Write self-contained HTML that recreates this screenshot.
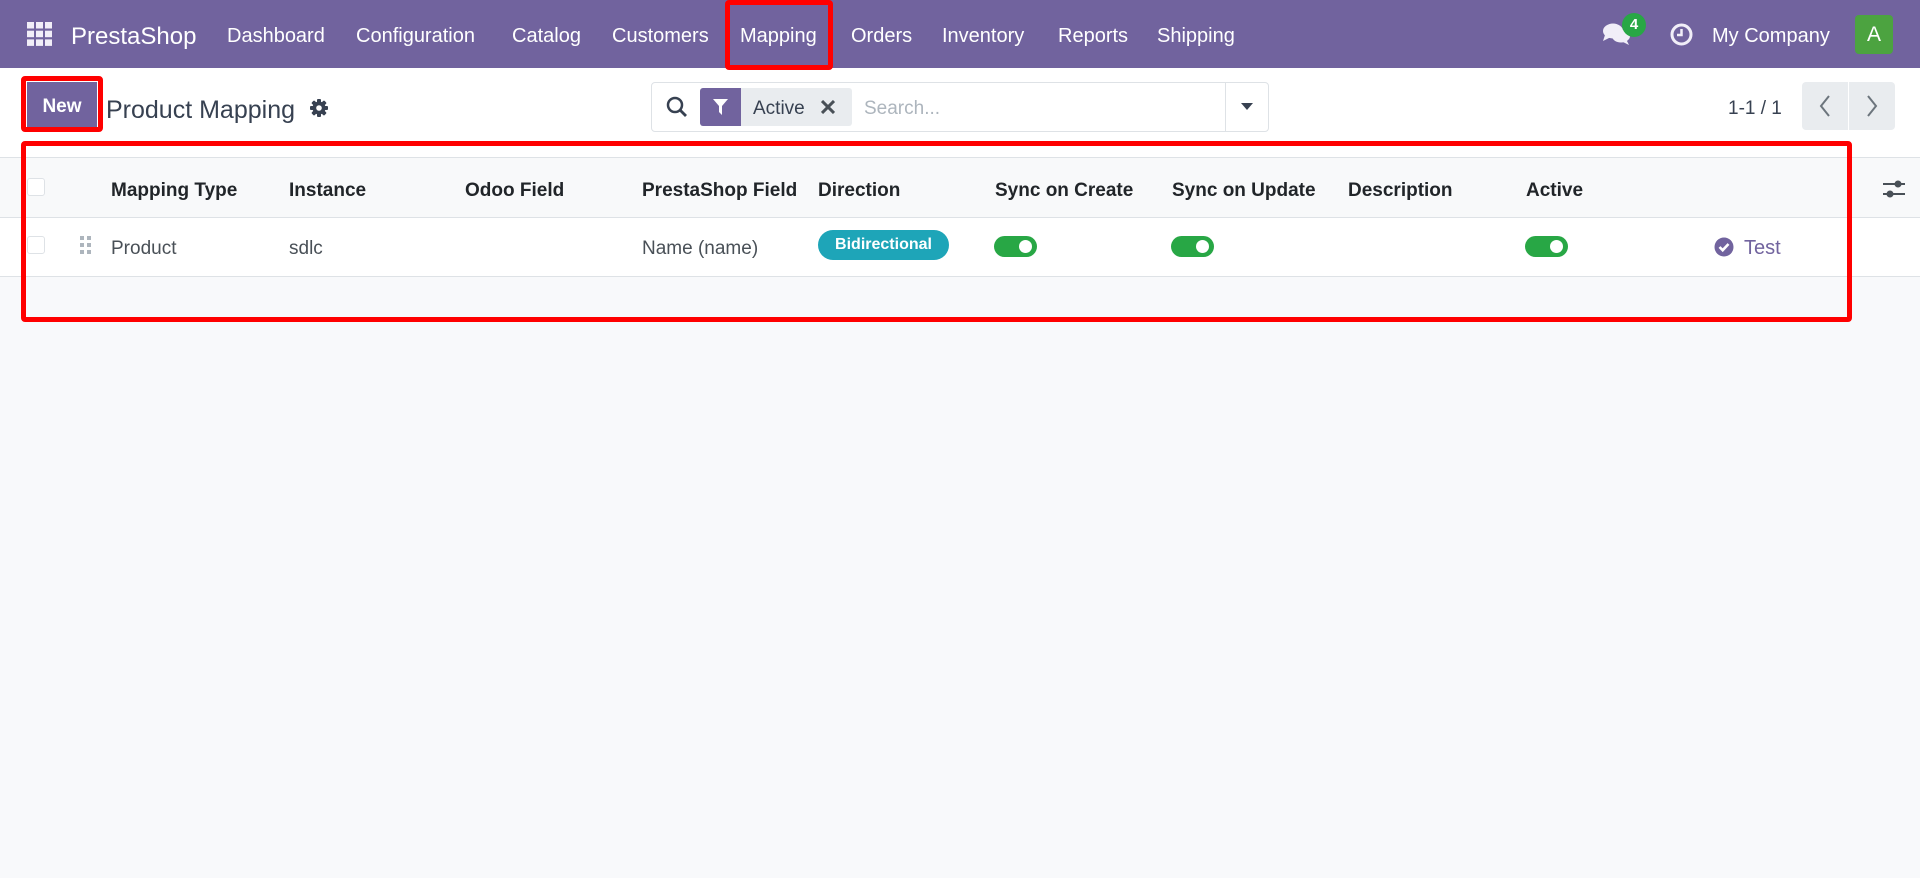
<!DOCTYPE html>
<html><head><meta charset="utf-8"><style>
*{box-sizing:border-box;margin:0;padding:0}
body{width:1920px;height:878px;overflow:hidden;background:#f8f9fb;font-family:"Liberation Sans",sans-serif;color:#374151;position:relative}
.a{position:absolute;white-space:nowrap}
.nav{position:absolute;left:0;top:0;width:1920px;height:68px;background:#71639e;color:#fff}
.nav .a{font-size:20px;top:25px;color:#fff}
.cp{position:absolute;left:0;top:68px;width:1920px;height:90px;background:#fff}
.th{font-weight:bold;font-size:19px;color:#212529;top:180px}
.td{font-size:19px;color:#495057;top:238px}
.tog{position:absolute;width:43px;height:21px;border-radius:11px;background:#28a745;top:236px}
.tog:after{content:"";position:absolute;right:5px;top:4px;width:13px;height:13px;border-radius:50%;background:#fff}
.red{position:absolute;border:5px solid #ff0000;border-radius:4px}
</style></head><body>
<div class="nav">
 <svg class="a" style="left:27px;top:22px" width="25" height="24" viewBox="0 0 25 24" fill="#f1eef8"><rect x="0" y="0" width="7" height="6.5"/><rect x="9" y="0" width="7" height="6.5"/><rect x="18" y="0" width="7" height="6.5"/><rect x="0" y="8.7" width="7" height="6.5"/><rect x="9" y="8.7" width="7" height="6.5"/><rect x="18" y="8.7" width="7" height="6.5"/><rect x="0" y="17.4" width="7" height="6.5"/><rect x="9" y="17.4" width="7" height="6.5"/><rect x="18" y="17.4" width="7" height="6.5"/></svg>
 <div class="a" style="left:71px;top:23px;font-size:24px">PrestaShop</div>
 <div class="a" style="left:227px">Dashboard</div>
 <div class="a" style="left:356px">Configuration</div>
 <div class="a" style="left:512px">Catalog</div>
 <div class="a" style="left:612px">Customers</div>
 <div class="a" style="left:740px">Mapping</div>
 <div class="a" style="left:851px">Orders</div>
 <div class="a" style="left:942px">Inventory</div>
 <div class="a" style="left:1058px">Reports</div>
 <div class="a" style="left:1157px">Shipping</div>
 <svg class="a" style="left:1602px;top:22px" width="30" height="24" viewBox="0 0 30 24" fill="#f1eef8"><ellipse cx="11" cy="9" rx="10" ry="7.5"/><path d="M3 13 L1 19 L9 15Z"/><ellipse cx="19" cy="14" rx="9" ry="6.5"/><path d="M24 17 L27 23 L19 19Z"/></svg>
 <div class="a" style="left:1622px;top:13px;width:24px;height:24px;border-radius:50%;background:#28a745;color:#fff;font-size:15px;font-weight:bold;text-align:center;line-height:24px">4</div>
 <svg class="a" style="left:1670px;top:23px" width="23" height="23" viewBox="0 0 23 23"><circle cx="11.5" cy="11.5" r="9.5" fill="none" stroke="#f1eef8" stroke-width="3"/><path d="M11.5 6 V12 H7" fill="none" stroke="#f1eef8" stroke-width="2.5"/></svg>
 <div class="a" style="left:1712px">My Company</div>
 <div class="a" style="left:1855px;top:15px;width:38px;height:39px;border-radius:4px;background:#4ca340;color:#fff;font-size:21px;text-align:center;line-height:39px">A</div>
</div>
<div class="cp"></div>
<div class="a" style="left:27px;top:82px;width:70px;height:47px;background:#71639e;color:#fff;font-weight:bold;font-size:19px;text-align:center;line-height:49px">New</div>
<div class="a" style="left:106px;top:96px;font-size:25px;color:#374151">Product Mapping</div>
<svg class="a" style="left:310px;top:99px" width="18" height="18" viewBox="0 0 18 18"><g fill="#374151"><circle cx="9" cy="9" r="6.5"/><rect x="7" y="0" width="4" height="18" rx="1"/><rect x="0" y="7" width="18" height="4" rx="1"/><rect x="7" y="0" width="4" height="18" rx="1" transform="rotate(45 9 9)"/><rect x="7" y="0" width="4" height="18" rx="1" transform="rotate(-45 9 9)"/></g><circle cx="9" cy="9" r="2.8" fill="#fff"/></svg>
<div class="a" style="left:651px;top:82px;width:618px;height:50px;border:1px solid #dee2e6;border-radius:4px;background:#fff"></div>
<svg class="a" style="left:666px;top:96px" width="22" height="22" viewBox="0 0 22 22"><circle cx="9" cy="9" r="7" fill="none" stroke="#374151" stroke-width="2.5"/><path d="M14 14 L20 20" stroke="#374151" stroke-width="2.8"/></svg>
<div class="a" style="left:700px;top:88px;width:152px;height:38px;border-radius:3px;background:#e9ecef"></div>
<div class="a" style="left:700px;top:88px;width:41px;height:38px;border-radius:3px 0 0 3px;background:#71639e"></div>
<svg class="a" style="left:713px;top:99px" width="15" height="16" viewBox="0 0 15 16"><path d="M0 0 H15 L9 7 V16 L6 13 V7Z" fill="#fff"/></svg>
<div class="a" style="left:753px;top:98px;font-size:19px;color:#374151">Active</div>
<svg class="a" style="left:821px;top:100px" width="14" height="14" viewBox="0 0 14 14"><path d="M1 1 L13 13 M13 1 L1 13" stroke="#495057" stroke-width="3"/></svg>
<div class="a" style="left:864px;top:98px;font-size:19px;color:#adb5bd">Search...</div>
<div class="a" style="left:1225px;top:82px;width:1px;height:50px;background:#dee2e6"></div>
<svg class="a" style="left:1241px;top:103px" width="12" height="8" viewBox="0 0 12 8"><path d="M0 0 H12 L6 7Z" fill="#374151"/></svg>
<div class="a" style="left:1728px;top:98px;font-size:19px;color:#374151">1-1 / 1</div>
<div class="a" style="left:1802px;top:82px;width:46px;height:48px;background:#e9ecef;border-radius:4px 0 0 4px"></div>
<div class="a" style="left:1849px;top:82px;width:46px;height:48px;background:#e9ecef;border-radius:0 4px 4px 0"></div>
<svg class="a" style="left:1818px;top:94px" width="14" height="24" viewBox="0 0 14 24"><path d="M11 2 L3 12 L11 22" fill="none" stroke="#6c757d" stroke-width="2"/></svg>
<svg class="a" style="left:1865px;top:94px" width="14" height="24" viewBox="0 0 14 24"><path d="M3 2 L11 12 L3 22" fill="none" stroke="#6c757d" stroke-width="2"/></svg>

<div class="a" style="left:0;top:157px;width:1920px;height:1px;background:#dee2e6"></div>
<div class="a" style="left:0;top:158px;width:1920px;height:59px;background:#f8f9fa"></div>
<div class="a" style="left:0;top:217px;width:1920px;height:1px;background:#dee2e6"></div>
<div class="a" style="left:0;top:218px;width:1920px;height:58px;background:#fff"></div>
<div class="a" style="left:0;top:276px;width:1920px;height:1px;background:#dee2e6"></div>
<div class="a" style="left:27px;top:178px;width:18px;height:18px;border:1px solid #dee2e6;border-radius:3px;background:#fff"></div>
<div class="a" style="left:27px;top:236px;width:18px;height:18px;border:1px solid #dee2e6;border-radius:3px;background:#fff"></div>
<div class="a th" style="left:111px">Mapping Type</div>
<div class="a th" style="left:289px">Instance</div>
<div class="a th" style="left:465px">Odoo Field</div>
<div class="a th" style="left:642px">PrestaShop Field</div>
<div class="a th" style="left:818px">Direction</div>
<div class="a th" style="left:995px">Sync on Create</div>
<div class="a th" style="left:1172px">Sync on Update</div>
<div class="a th" style="left:1348px">Description</div>
<div class="a th" style="left:1526px">Active</div>
<svg class="a" style="left:1883px;top:180px" width="22" height="18" viewBox="0 0 22 18"><path d="M0 4 H22 M0 14 H22" stroke="#495057" stroke-width="2"/><circle cx="15" cy="4" r="3.5" fill="#495057"/><circle cx="7" cy="14" r="3.5" fill="#495057"/></svg>
<svg class="a" style="left:80px;top:236px" width="12" height="20" viewBox="0 0 12 20" fill="#adb5bd"><rect x="0" y="0" width="4" height="4"/><rect x="7" y="0" width="4" height="4"/><rect x="0" y="7" width="4" height="4"/><rect x="7" y="7" width="4" height="4"/><rect x="0" y="14" width="4" height="4"/><rect x="7" y="14" width="4" height="4"/></svg>
<div class="a td" style="left:111px">Product</div>
<div class="a td" style="left:289px">sdlc</div>
<div class="a td" style="left:642px">Name (name)</div>
<div class="a" style="left:818px;top:230px;width:131px;height:30px;border-radius:15px;background:#1ea5b8;color:#fff;font-weight:bold;font-size:16px;text-align:center;line-height:30px">Bidirectional</div>
<div class="tog" style="left:994px"></div>
<div class="tog" style="left:1171px"></div>
<div class="tog" style="left:1525px"></div>
<svg class="a" style="left:1714px;top:237px" width="20" height="20" viewBox="0 0 20 20"><circle cx="10" cy="10" r="9.5" fill="#71639e"/><path d="M5.5 10 L8.7 13.2 L14.5 7" fill="none" stroke="#fff" stroke-width="2.6"/></svg>
<div class="a" style="left:1744px;top:237px;font-size:20px;color:#71639e">Test</div>

<div class="red" style="left:725px;top:0;width:108px;height:70px"></div>
<div class="red" style="left:21px;top:76px;width:82px;height:56px"></div>
<div class="red" style="left:21px;top:141px;width:1831px;height:181px"></div>
</body></html>
